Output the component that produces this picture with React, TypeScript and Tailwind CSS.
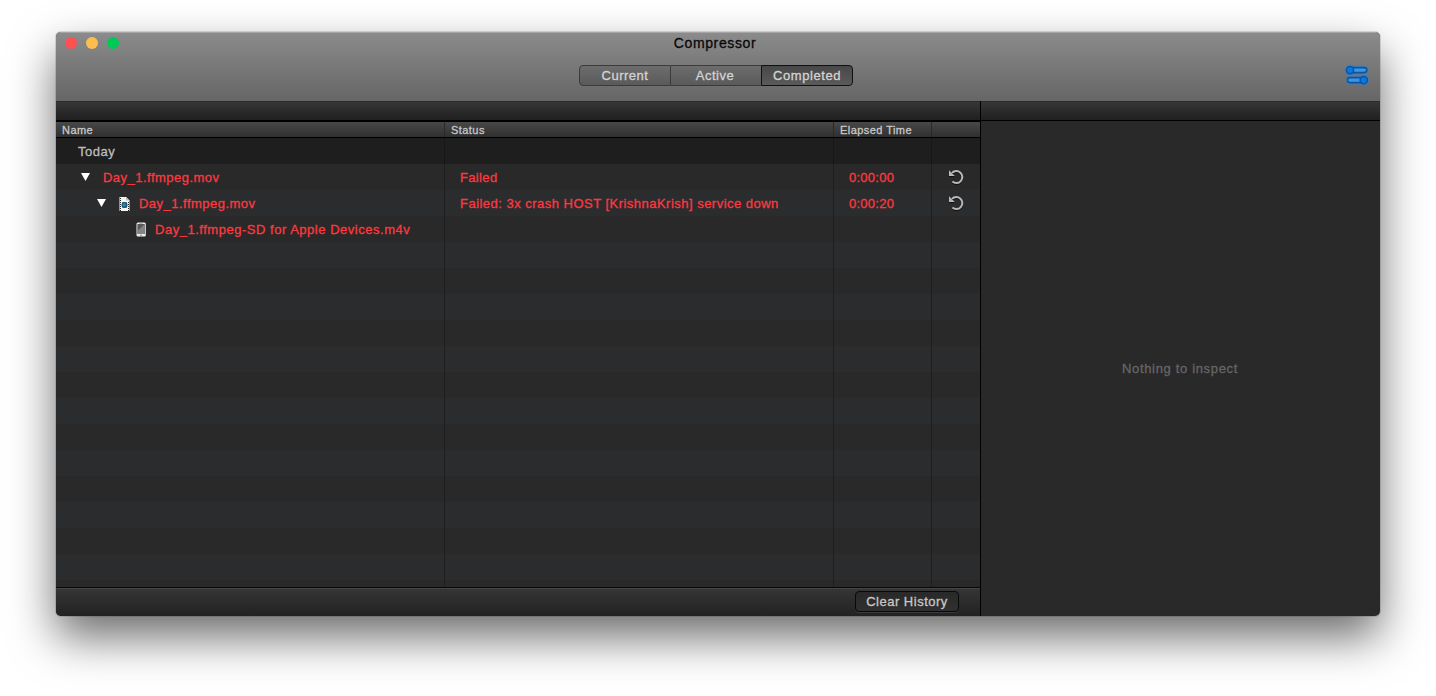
import React from "react";

type Row = {
  name: string;
  status: string;
  time: string;
  pad: string;
  nameTracking: string;
  statusTracking: string;
  arrow: boolean;
  icon: "none" | "movie" | "phone";
};

const rows: Row[] = [
  {
    name: "Day_1.ffmpeg.mov",
    status: "Failed",
    time: "0:00:00",
    pad: "pl-[25px]",
    nameTracking: "tracking-[0.48px]",
    statusTracking: "tracking-[0.35px]",
    arrow: true,
    icon: "none",
  },
  {
    name: "Day_1.ffmpeg.mov",
    status: "Failed: 3x crash HOST [KrishnaKrish] service down",
    time: "0:00:20",
    pad: "pl-[41px]",
    nameTracking: "tracking-[0.48px]",
    statusTracking: "tracking-[0.48px]",
    arrow: true,
    icon: "movie",
  },
  {
    name: "Day_1.ffmpeg-SD for Apple Devices.m4v",
    status: "",
    time: "",
    pad: "pl-[80px]",
    nameTracking: "tracking-[0.52px]",
    statusTracking: "",
    arrow: false,
    icon: "phone",
  },
];

const cols = "grid grid-cols-[389px_389px_98px_48px]";

function Retry() {
  return (
    <svg width="16" height="16" viewBox="0 0 16 16" className="mt-[5px] ml-4 drop-shadow-[0_1px_0_#111]">
      <path d="M4 3.9A6 6 0 1 1 4.4 12.6" fill="none" stroke="#b8b8b8" strokeWidth="2" />
      <path d="M1 1.2L6.8 7H1Z" fill="#b8b8b8" />
    </svg>
  );
}

function Movie() {
  return (
    <svg width="11" height="14" viewBox="0 0 11 14" className="mr-[9px] ml-[13px]">
      <path d="M0.5 0H7L10.5 3.5V14H0.5Z" fill="#f4f4f4" />
      <path d="M7 0V3.5H10.5Z" fill="#c4c4c4" />
      <path d="M1.5 1V14M9.5 5V14" stroke="#222" strokeWidth="1" strokeDasharray="1 1" />
      <path d="M3 5H8V11H3Z" fill="#8d9aa3" />
      <circle cx="5.5" cy="8" r="3" fill="#24506b" />
      <circle cx="5.2" cy="7.8" r="1.9" fill="#1686c4" />
    </svg>
  );
}

function Phone() {
  return (
    <svg width="10" height="15" viewBox="0 0 10 15" className="mr-[9px]">
      <rect x="0.5" y="0.5" width="9.3" height="14" rx="1.5" fill="#eeeeee" />
      <rect x="1.4" y="2" width="7.4" height="10" fill="#5a5a5a" />
      <path d="M1.4 12V9L8.8 2V12Z" fill="#858585" />
      <path d="M3.5 1.2H6.5" stroke="#777" strokeWidth=".7" />
      <circle cx="5" cy="13.2" r=".8" fill="#777" />
    </svg>
  );
}

function NameCell({ row }: { row: Row }) {
  return (
    <div className={`flex h-full items-center border-r border-[#1e1e1e] ${row.pad}`}>
      {row.arrow && (
        <svg width="9" height="8" viewBox="0 0 9 8" className="mb-[2px]">
          <path d="M0 0H9L4.5 8Z" fill="#fff" />
        </svg>
      )}
      {row.icon === "none" && <span className="w-[13px]" />}
      {row.icon === "movie" && <Movie />}
      {row.icon === "phone" && <Phone />}
      <span className={`whitespace-nowrap ${row.nameTracking}`}>{row.name}</span>
    </div>
  );
}

export default function App() {
  return (
    <div className="h-[696px] w-[1436px] overflow-hidden bg-white px-14 pt-8 font-['Liberation_Sans',Arial,sans-serif] text-[13px] [-webkit-text-stroke:0.3px_currentColor]">
      <div className="flex h-[584px] w-[1324px] flex-col overflow-hidden rounded-[5px] bg-[#292929] shadow-[0_0_0_1px_rgba(0,0,0,0.12),0_21px_46px_rgba(0,0,0,0.58)]">
        <header className="grid h-[69px] shrink-0 grid-cols-[523px_274px_1fr] border-t border-[#a5a5a5] bg-linear-to-b from-[#8b8b8b] to-[#666666]">
          <div className="flex gap-[9px] pt-[4px] pl-[9px]">
            <span className="size-3 rounded-full bg-[#ff5052]" />
            <span className="size-3 rounded-full bg-[#ffbd4f]" />
            <span className="size-3 rounded-full bg-[#00c956]" />
          </div>
          <div className="flex flex-col items-center">
            <h1 className="mt-[2px] h-4 pr-[2px] text-sm leading-4 tracking-[0.63px] text-[#090909]">Compressor</h1>
            <div className="mt-[14px] grid h-[21px] w-[274px] grid-cols-[92px_90px_92px] text-center leading-[20px] tracking-[0.5px] text-[#d3d3d3]">
              <button className="rounded-l-[4px] border border-[#3b3b3b] bg-linear-to-b from-[#6d6d6d] to-[#5a5a5a] leading-[19px]">Current</button>
              <button className="border-y border-[#3b3b3b] bg-linear-to-b from-[#6d6d6d] to-[#5a5a5a] pr-[2px] leading-[19px]">Active</button>
              <button className="rounded-r-[4px] border border-[#111] bg-linear-to-b from-[#484848] to-[#5a5a5a] leading-[19px] tracking-[0.58px]">Completed</button>
            </div>
          </div>
          <div className="flex justify-end pt-[30px] pr-[9px]">
            <svg width="28" height="26" viewBox="0 0 28 26" className="drop-shadow-[0_0_1px_#1589ee]">
              <g fill="#3d96e0" stroke="#0a55a8" strokeWidth="1.6">
                <rect x="6" y="4.6" width="17.8" height="5" rx="2.5" />
                <circle cx="7" cy="7.1" r="3.6" fill="#0879e0" />
                <rect x="4.4" y="14.6" width="18" height="5" rx="2.5" />
                <circle cx="20.8" cy="17.1" r="3.6" fill="#0879e0" />
              </g>
            </svg>
          </div>
        </header>
        <div className="grid min-h-0 flex-1 grid-cols-[925px_399px]">
          <main className="flex min-h-0 flex-col border-r border-black">
            <div className="h-[21px] shrink-0 border-t border-b-2 border-t-[#2c2c2c] border-b-black bg-linear-to-b from-[#363636] to-[#202020]" />
            <div className={`${cols} h-4 shrink-0 border-b border-black bg-linear-to-b from-[#484848] to-[#303030] text-[11px] leading-[17px] tracking-[0.45px] text-[#c8c8c8]`}>
              <div className="h-[15px] border-r border-[#292929] pl-1.5">Name</div>
              <div className="h-[15px] border-r border-[#292929] pl-1.5">Status</div>
              <div className="h-[15px] border-r border-[#292929] pl-1.5">Elapsed Time</div>
              <div />
            </div>
            <div className={`${cols} h-[26px] shrink-0 bg-[#1e1e1e] leading-[27px] text-[#bdbdbd]`}>
              <div className="border-r border-[#171717] pl-[22px] tracking-[0.5px]">Today</div>
              <div className="border-r border-[#171717]" />
              <div className="border-r border-[#171717]" />
              <div />
            </div>
            <div className="min-h-0 flex-1 overflow-hidden text-[#ff3840]">
              {Array.from({ length: 17 }, (_, i) => {
                const row = rows[i];
                return (
                  <div key={i} className={`${cols} h-[26px] ${i % 2 ? "bg-[#2b2c2e]" : "bg-[#292929]"} leading-[27px]`}>
                    {row ? <NameCell row={row} /> : <div className="border-r border-[#1e1e1e]" />}
                    <div className={`border-r border-[#1e1e1e] pl-[15px] whitespace-nowrap ${row ? row.statusTracking : ""}`}>{row?.status}</div>
                    <div className="border-r border-[#1e1e1e] pl-[15px] tracking-[0.25px]">{row?.time}</div>
                    <div>{row?.time && <Retry />}</div>
                  </div>
                );
              })}
            </div>
            <footer className="relative flex h-[28px] shrink-0 justify-end border-t border-[#454545] bg-linear-to-b from-[#353535] to-[#222] pt-[2px] pr-[21px] shadow-[0_-1px_0_#080808]">
              <button className="h-[21px] w-[104px] rounded-[4px] border border-[#090909] bg-linear-to-b from-[#292929] to-[#303030] leading-[19px] tracking-[0.5px] text-[#c8c8c8] shadow-[0_1px_0_#3a3a3a]">Clear History</button>
            </footer>
          </main>
          <aside className="flex flex-col">
            <div className="h-5 shrink-0 border-t border-b border-t-[#2c2c2c] border-b-black bg-linear-to-b from-[#363636] to-[#202020]" />
            <div className="flex flex-1 items-center justify-center pr-px tracking-[0.66px] text-[#666]">Nothing to inspect</div>
          </aside>
        </div>
      </div>
    </div>
  );
}
